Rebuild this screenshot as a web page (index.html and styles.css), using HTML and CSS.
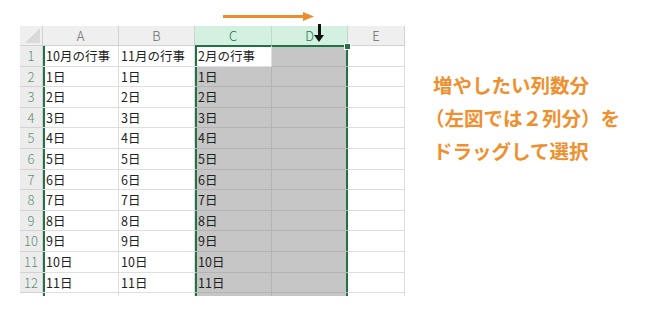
FILE: index.html
```html
<!DOCTYPE html>
<html lang="ja">
<head>
    <meta charset="UTF-8">
    <title>列の挿入</title>
    <link rel="stylesheet" href="styles.css">
</head>
<body>

    <div class="page">
        <div class="sheet-wrap">
            <svg class="arrows" width="320" height="46" viewBox="0 0 320 46">
                <rect x="203" y="15" width="84" height="3" fill="#ee8b2b"/>
                <polygon points="283,12 294,16.5 283,21" fill="#ee8b2b"/>
                <rect x="298" y="24" width="3" height="12" fill="#111"/>
                <polygon points="294,35 304,35 299,42" fill="#111"/>
            </svg>

            <div class="sheet">
                <div class="cell corner"></div>
                <div class="cell ch">A</div>
                <div class="cell ch">B</div>
                <div class="cell ch on">C</div>
                <div class="cell ch on">D</div>
                <div class="cell ch">E</div>

                <div class="cell rh">1</div>
                <div class="cell a">10月の行事</div>
                <div class="cell">11月の行事</div>
                <div class="cell c top active">2月の行事</div>
                <div class="cell d sel top handle"></div>
                <div class="cell"></div>

                <div class="cell rh">2</div>
                <div class="cell a">1日</div>
                <div class="cell">1日</div>
                <div class="cell c sel">1日</div>
                <div class="cell d sel"></div>
                <div class="cell"></div>

                <div class="cell rh">3</div>
                <div class="cell a">2日</div>
                <div class="cell">2日</div>
                <div class="cell c sel">2日</div>
                <div class="cell d sel"></div>
                <div class="cell"></div>

                <div class="cell rh">4</div>
                <div class="cell a">3日</div>
                <div class="cell">3日</div>
                <div class="cell c sel">3日</div>
                <div class="cell d sel"></div>
                <div class="cell"></div>

                <div class="cell rh">5</div>
                <div class="cell a">4日</div>
                <div class="cell">4日</div>
                <div class="cell c sel">4日</div>
                <div class="cell d sel"></div>
                <div class="cell"></div>

                <div class="cell rh">6</div>
                <div class="cell a">5日</div>
                <div class="cell">5日</div>
                <div class="cell c sel">5日</div>
                <div class="cell d sel"></div>
                <div class="cell"></div>

                <div class="cell rh">7</div>
                <div class="cell a">6日</div>
                <div class="cell">6日</div>
                <div class="cell c sel">6日</div>
                <div class="cell d sel"></div>
                <div class="cell"></div>

                <div class="cell rh">8</div>
                <div class="cell a">7日</div>
                <div class="cell">7日</div>
                <div class="cell c sel">7日</div>
                <div class="cell d sel"></div>
                <div class="cell"></div>

                <div class="cell rh">9</div>
                <div class="cell a">8日</div>
                <div class="cell">8日</div>
                <div class="cell c sel">8日</div>
                <div class="cell d sel"></div>
                <div class="cell"></div>

                <div class="cell rh">10</div>
                <div class="cell a">9日</div>
                <div class="cell">9日</div>
                <div class="cell c sel">9日</div>
                <div class="cell d sel"></div>
                <div class="cell"></div>

                <div class="cell rh">11</div>
                <div class="cell a">10日</div>
                <div class="cell">10日</div>
                <div class="cell c sel">10日</div>
                <div class="cell d sel"></div>
                <div class="cell"></div>

                <div class="cell rh">12</div>
                <div class="cell a">11日</div>
                <div class="cell">11日</div>
                <div class="cell c sel">11日</div>
                <div class="cell d sel"></div>
                <div class="cell"></div>

                <div class="cell rh cut"></div>
                <div class="cell a cut"></div>
                <div class="cell cut"></div>
                <div class="cell c sel cut"></div>
                <div class="cell d sel cut"></div>
                <div class="cell cut"></div>
            </div>
        </div>

        <div class="note">
            <p>増やしたい列数分</p>
            <p class="paren">（左図では２列分）を</p>
            <p>ドラッグして選択</p>
        </div>
    </div>

</body>
</html>
```

FILE: styles.css
```css
* {
    margin: 0;
    padding: 0;
    box-sizing: border-box;
}

body {
    width: 651px;
    height: 309px;
    background-color: #fff;
    font-family: 'Noto Sans CJK JP', 'Noto Sans', sans-serif;
    overflow: hidden;
}

.page {
    display: flex;
    align-items: flex-start;
    padding-left: 20px;
}

.sheet-wrap {
    position: relative;
    padding-top: 26px;
}

/* arrows drawn over the sheet */
.arrows {
    position: absolute;
    top: 0;
    left: 0;
    z-index: 2;
}

.sheet {
    display: grid;
    grid-template-columns: 23px 76px 76px 77px 76px 57px;
    grid-template-rows: 20px repeat(12, 20.6px) 3px;
}

.cell {
    border-right: 1px solid #dedede;
    border-bottom: 1px solid #dedede;
    font-size: 12.5px;
    line-height: 20px;
    color: #222;
    padding-left: 2px;
    white-space: nowrap;
    overflow: hidden;
}

.corner {
    position: relative;
    background-color: #efefef;
    border-right-color: #d2d2d2;
    border-bottom-color: #d2d2d2;
}

.corner::after {
    content: '';
    position: absolute;
    right: 2px;
    bottom: 2px;
    width: 15px;
    height: 15px;
    background-color: #d9d9d9;
    clip-path: polygon(100% 0, 100% 100%, 0 100%);
}

.ch {
    background-color: #efefef;
    border-right-color: #d2d2d2;
    border-bottom-color: #d2d2d2;
    text-align: center;
    color: #666;
    font-size: 13px;
    font-weight: 300;
    padding-left: 0;
}

.ch.on {
    background-color: #d3f0e0;
    color: #217346;
    border-right-color: #b9dcc8;
    border-bottom-color: #217346;
}

.rh {
    background-color: #ececec;
    border-right-color: #d2d2d2;
    border-bottom-color: #d2d2d2;
    text-align: center;
    color: #5f8f73;
    font-size: 13px;
    font-weight: 300;
    padding-left: 0;
}

.a {
    box-shadow: inset 2px 0 #217346;
    padding-left: 3px;
}

.sel {
    background-color: #c6c6c6;
    border-right-color: #b4b4b4;
    border-bottom-color: #b4b4b4;
}

.c {
    box-shadow: inset 2px 0 #217346;
    padding-left: 3px;
}

.c.active {
    background-color: #fff;
}

.d {
    border-right: none;
    box-shadow: inset -2px 0 #217346;
}

.d.top {
    box-shadow: inset -2px 0 #217346, inset 0 1px #217346;
}

.c.top {
    box-shadow: inset 2px 0 #217346, inset 0 1px #217346;
}

.handle {
    position: relative;
    overflow: visible;
}

/* fill handle at the corner of the selection */
.handle::after {
    content: '';
    position: absolute;
    top: -3px;
    right: -3px;
    width: 5px;
    height: 5px;
    background-color: #217346;
    border: 1px solid #fff;
}

.cut {
    border-bottom: none;
}

.rh.cut {
    background-color: #fff;
    border-right-color: #e6e6e6;
}

.note {
    margin-left: 28px;
    margin-top: 68px;
}

.note p {
    font-size: 19.5px;
    line-height: 33px;
    font-weight: 700;
    color: #ef8f2e;
    white-space: nowrap;
}

.note .paren {
    margin-left: -8px;
}
```
